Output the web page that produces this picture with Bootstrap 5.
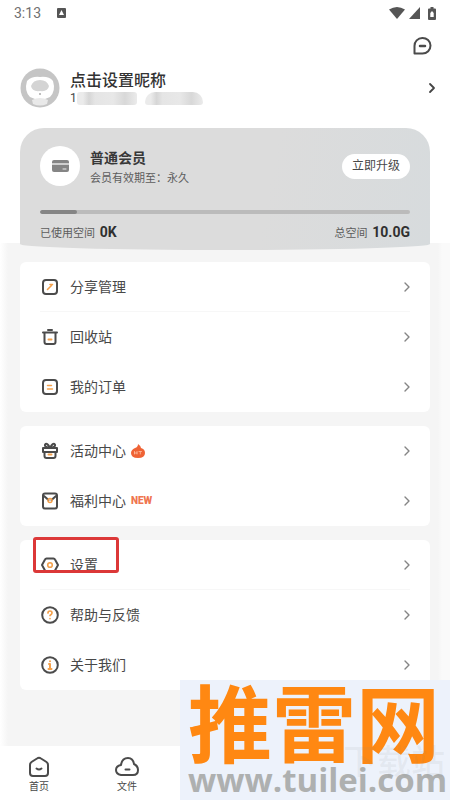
<!DOCTYPE html>
<html lang="zh-CN">
<head>
<meta charset="utf-8">
<meta name="viewport" content="width=device-width, initial-scale=1">
<title>我的</title>
<link href="https://cdn.jsdelivr.net/npm/bootstrap@5.3.0/dist/css/bootstrap.min.css" rel="stylesheet">
<style>
body{font-family:Roboto,"Noto Sans CJK SC",sans-serif;font-size:14px;line-height:20px;color:#484848;background:#fff}
svg{display:block;flex:none;fill:none;stroke:#4b4b4b;stroke-width:2;stroke-linecap:round;stroke-linejoin:round}
a,a:hover{color:inherit;text-decoration:none}
.screen{min-height:100vh;overflow:hidden}
.statusbar{height:26px;padding:0 14px;color:#707070}
.statusbar svg{fill:#555;stroke:none}
.topbar{height:40px;padding:0 18px}
.profile{height:44px;padding:0 12px 0 20px;gap:10px}
.nick{font-size:16px;font-weight:500;color:#333}
.masked{height:14px;font-size:12px;line-height:14px}
.mosaic{height:13px;border-radius:3px;background:linear-gradient(90deg,#ebebeb 10%,#d6d6d6 20%,#e5e5e5 30%,#e8e8e8 60%,#d8d8d8 80%,#ebebeb)}
.mosaic-a{width:60px}.mosaic-b{width:58px;border-radius:10px 10px 3px 3px}
.member{z-index:1;margin:18px 20px 0;padding:18px 20px 7px;height:122px;background:linear-gradient(100deg,#dcdcdc 60%,#d7dbdd);border-radius:24px 24px 50% 50%/24px 24px 6px 6px}
.medal{width:40px;height:40px}
.plan{gap:10px;height:40px}
.member h1{font-size:14px;line-height:22px;font-weight:700;color:#383838}
.tiny{font-size:11px;line-height:20px;color:#5c5c5c}
.upgrade{height:25px;padding:0 10px;font-size:12px;line-height:24px;border:0;background:#fff;color:#484848}
.quota{height:4px;margin-top:24px;background:#bbb}
.quota .progress-bar{background:#858585}
.amount{font-size:14px;font-weight:700;color:#303030;margin-left:2px}
.content{margin-top:-7px;padding:19px 20px 54px;background:linear-gradient(90deg,#fff 0,#f5f5f5 8px,#f5f5f5 calc(100% - 12px),#fafafa calc(100% - 8px))}
.menu{gap:14px}
.menu .list-group{border-radius:6px;background:#fff}
.menu .entry{height:50px;padding:0 17px 0 20px;gap:10px;position:relative}
.ruled::after{content:"";position:absolute;left:20px;right:20px;bottom:0;border-bottom:1px solid #f7f7f7}
.menu .entry>svg:first-child{width:20px;height:20px}
.menu .accent{stroke:#f4a14c}
.menu .chevron,.profile .chevron{width:12px;height:14px;stroke-width:1.4;stroke:#858585}
.profile .chevron{stroke:#444;stroke-width:1.8}
.tagged{margin-left:-5px}
.new{font-size:10px;font-weight:900;color:#ef7650}
.highlight{position:absolute;left:13px;top:-3px;width:86px;height:36px;border:3px solid #dc3838;border-radius:3px;pointer-events:none}
.tabs{height:54px;padding:9px 10px 0;gap:30px;background:#fff}
.tabs a{width:58px;font-size:10px;line-height:16px}
.stamp{position:absolute;right:0;bottom:0;width:270px;height:120px;padding-left:8px;background:#edf2fb;white-space:nowrap}
.stamp-name{font:700 84px/80px "Noto Sans CJK SC",sans-serif;color:#ff8812}
.stamp-url{font:700 33px/40px "Open Sans",sans-serif;color:#aeb0b0}
.stamp-ghost{position:absolute;right:5px;top:60px;font:500 34px/40px "Noto Sans CJK SC",sans-serif;color:#88888818}
</style>
<script src="https://cdn.jsdelivr.net/npm/bootstrap@5.3.0/dist/js/bootstrap.bundle.min.js"></script>
</head>
<body>
<div class="screen d-flex flex-column position-relative">
  <header>
    <div class="statusbar d-flex align-items-center">
      <span>3:13</span>
      <svg class="ms-3" width="9" height="10" viewBox="0 0 9 10"><rect width="9" height="10" rx="1"/><path d="M2 7l2.500-5 2.500 5z" fill="#fff"/></svg>
      <svg class="ms-auto" width="16" height="12" viewBox="0 0 16 12"><path d="M0 2.500Q8-2.500 16 2.500L8 12z"/></svg>
      <svg class="ms-1" width="11" height="12" viewBox="0 0 11 12"><path d="M11 0v12H0z"/></svg>
      <svg class="ms-2" width="8" height="13" viewBox="0 0 8 13"><path fill-rule="evenodd" d="M2.500 0h3v1.500H7q1 0 1 1V12q0 1-1 1H1q-1 0-1-1V2.500q0-1 1-1h1.500zM4 4L2.300 6v4h3.400V6z"/></svg>
    </div>
    <div class="topbar d-flex justify-content-end align-items-center">
      <button type="button" class="btn p-0 border-0" aria-label="消息"><svg width="20" height="20" viewBox="0 0 20 20"><path d="M2.500 17.500V10A8 7.800 0 1 1 10.500 17.500z"/><path d="M8 10h5" stroke-width="2.500"/></svg></button>
    </div>
    <a href="#" class="profile d-flex align-items-center">
      <svg width="40" height="40" viewBox="0 0 40 40"><g stroke="none"><circle cx="20" cy="20" r="19.500" fill="#c5c5c5"/><path d="M7 13q5-5 13-4 9-1 13 4 3 10-3 16l-5 2H15l-5-2Q4 23 7 13z" fill="#fff"/><path d="M11 18q2-6 9-6t9 6q-1 6-9 5-8 1-9-5z" fill="#d4d4d4"/><path d="M12 32q8-4 16 0l-1 4q-7 3-14 0z" fill="#e9e9e9"/><circle cx="20" cy="26" r="1" fill="#aaa"/></g></svg>
      <div>
        <div class="nick">点击设置昵称</div>
        <div class="masked d-flex align-items-center gap-2"><span class="d-flex align-items-center">1<span class="mosaic mosaic-a"></span></span><span class="mosaic mosaic-b"></span></div>
      </div>
      <svg class="chevron ms-auto" viewBox="0 0 12 14"><path d="M4 3l4 4-4 4"/></svg>
    </a>
  </header>
  <section class="member position-relative">
    <div class="plan d-flex align-items-center">
      <div class="medal rounded-circle bg-white d-flex align-items-center justify-content-center"><svg width="17" height="14" viewBox="0 0 17 14"><rect x="0" y="1" width="17" height="12" rx="2" fill="#858585" stroke="none"/><path d="M0 5h17" stroke="#e8e8e8" stroke-width="1.500"/><path d="M11 10h3" stroke="#eee" stroke-width="1"/></svg></div>
      <div class="me-auto pt-1"><h1 class="m-0">普通会员</h1><div class="tiny">会员有效期至：永久</div></div>
      <button type="button" class="upgrade rounded-pill">立即升级</button>
    </div>
    <div class="quota progress" role="progressbar" aria-label="已使用空间" aria-valuenow="10" aria-valuemin="0" aria-valuemax="100"><div class="progress-bar rounded-pill" style="width:10%"></div></div>
    <div class="d-flex justify-content-between mt-2 tiny"><span>已使用空间 <span class="amount">0K</span></span><span>总空间 <span class="amount">10.0G</span></span></div>
  </section>
  <main class="content flex-grow-1">
    <nav class="menu d-flex flex-column" aria-label="功能">
      <div class="list-group">
        <a href="#" class="entry ruled d-flex align-items-center"><svg viewBox="0 0 20 20"><rect x="3" y="3" width="14" height="14" rx="3"/><path class="accent" d="M7.500 12.500l4-4M10 7.500h2.500" stroke-width="1.600"/></svg><span>分享管理</span><svg class="chevron ms-auto" viewBox="0 0 12 14"><path d="M4 3l4 4-4 4"/></svg></a>
        <a href="#" class="entry d-flex align-items-center"><svg viewBox="0 0 20 20"><path d="M3 5.500h14M8 3h4M4.500 6v9q0 2 2 2h7q2 0 2-2V6"/><path class="accent" d="M8.500 12.500h3"/></svg><span>回收站</span><svg class="chevron ms-auto" viewBox="0 0 12 14"><path d="M4 3l4 4-4 4"/></svg></a>
        <a href="#" class="entry d-flex align-items-center"><svg viewBox="0 0 20 20"><rect x="3" y="3" width="14" height="14" rx="3"/><path class="accent" d="M7.500 8.500h4M7.500 12h5" stroke-width="1.500"/></svg><span>我的订单</span><svg class="chevron ms-auto" viewBox="0 0 12 14"><path d="M4 3l4 4-4 4"/></svg></a>
      </div>
      <div class="list-group">
        <a href="#" class="entry d-flex align-items-center"><svg viewBox="0 0 20 20"><path d="M3 7h14v4H3zM4.500 11v4q0 2 2 2h7q2 0 2-2v-4M10 7Q4 6 5 3.500 7 1 10 7q3-6 5-3.500Q16 6 10 7"/><path class="accent" d="M8.500 13.500h3"/></svg><span>活动中心</span><svg width="14" height="16" viewBox="0 0 14 16" class="tagged"><path d="M7 1q3 2 3 4 4 1 4 5 0 5-7 5T0 10q0-3 4-5 3-1 3-4z" fill="#ef6335" stroke="none"/><path d="M3.500 11V8.500M3.500 10H6m0 1V8.500m2 0h2.500M9.300 9v2" stroke="#ffc0a3" stroke-width=".8"/></svg><svg class="chevron ms-auto" viewBox="0 0 12 14"><path d="M4 3l4 4-4 4"/></svg></a>
        <a href="#" class="entry d-flex align-items-center"><svg viewBox="0 0 20 20"><rect x="3" y="2.500" width="14" height="15" rx="2"/><path d="M4 5l4.500 4M16 5l-4.500 4"/><circle class="accent" cx="10" cy="9.500" r="2" stroke-width="1.500"/></svg><span>福利中心</span><span class="new tagged">NEW</span><svg class="chevron ms-auto" viewBox="0 0 12 14"><path d="M4 3l4 4-4 4"/></svg></a>
      </div>
      <div class="list-group position-relative">
        <a href="#" class="entry ruled d-flex align-items-center"><svg viewBox="0 0 20 20"><path d="M6.500 3.500h7q1 0 1.500 1l3 5.500-3 5.500q-.5 1-1.500 1h-7q-1 0-1.500-1L2 10l3-5.500q.5-1 1.500-1z"/><circle class="accent" cx="10" cy="10" r="2.300" stroke-width="1.600"/></svg><span>设置</span><svg class="chevron ms-auto" viewBox="0 0 12 14"><path d="M4 3l4 4-4 4"/></svg></a>
        <a href="#" class="entry d-flex align-items-center"><svg viewBox="0 0 20 20"><circle cx="10" cy="10" r="7.800"/><path class="accent" d="M8 8q0-2 2-2t2 2q0 1-2 2.500m0 3v.1" stroke-width="1.700"/></svg><span>帮助与反馈</span><svg class="chevron ms-auto" viewBox="0 0 12 14"><path d="M4 3l4 4-4 4"/></svg></a>
        <a href="#" class="entry d-flex align-items-center"><svg viewBox="0 0 20 20"><circle cx="10" cy="10" r="7.800"/><path class="accent" d="M10 6.200v.1M9 9h1v5M8.500 14h3"/></svg><span>关于我们</span><svg class="chevron ms-auto" viewBox="0 0 12 14"><path d="M4 3l4 4-4 4"/></svg></a>
        <div class="highlight"></div>
      </div>
    </nav>
  </main>
  <nav class="tabs d-flex" aria-label="底部导航">
    <a href="#" class="d-flex flex-column align-items-center"><svg width="24" height="24" viewBox="0 0 24 24"><path d="M3 10q0-2 1.500-3L10 3.500q2-1.500 4 0L19.500 7q1.500 1 1.500 3v8q0 3-3 3H6q-3 0-3-3z"/><path d="M9.500 13.500q2.500 2 5 0"/></svg>首页</a>
    <a href="#" class="d-flex flex-column align-items-center"><svg width="24" height="24" viewBox="0 0 24 24"><path d="M6 20q-5-1-5-5t5-5q1-7 7-7 5 0 6 6 4 2 4 6 0 5-5 5z"/><path d="M10.500 14.500h4"/></svg>文件</a>
  </nav>
  <aside class="stamp">
    <div class="stamp-ghost">下载站</div>
    <div class="stamp-name">推雷网</div>
    <div class="stamp-url">www.tuilei.com</div>
  </aside>
</div>
</body>
</html>
